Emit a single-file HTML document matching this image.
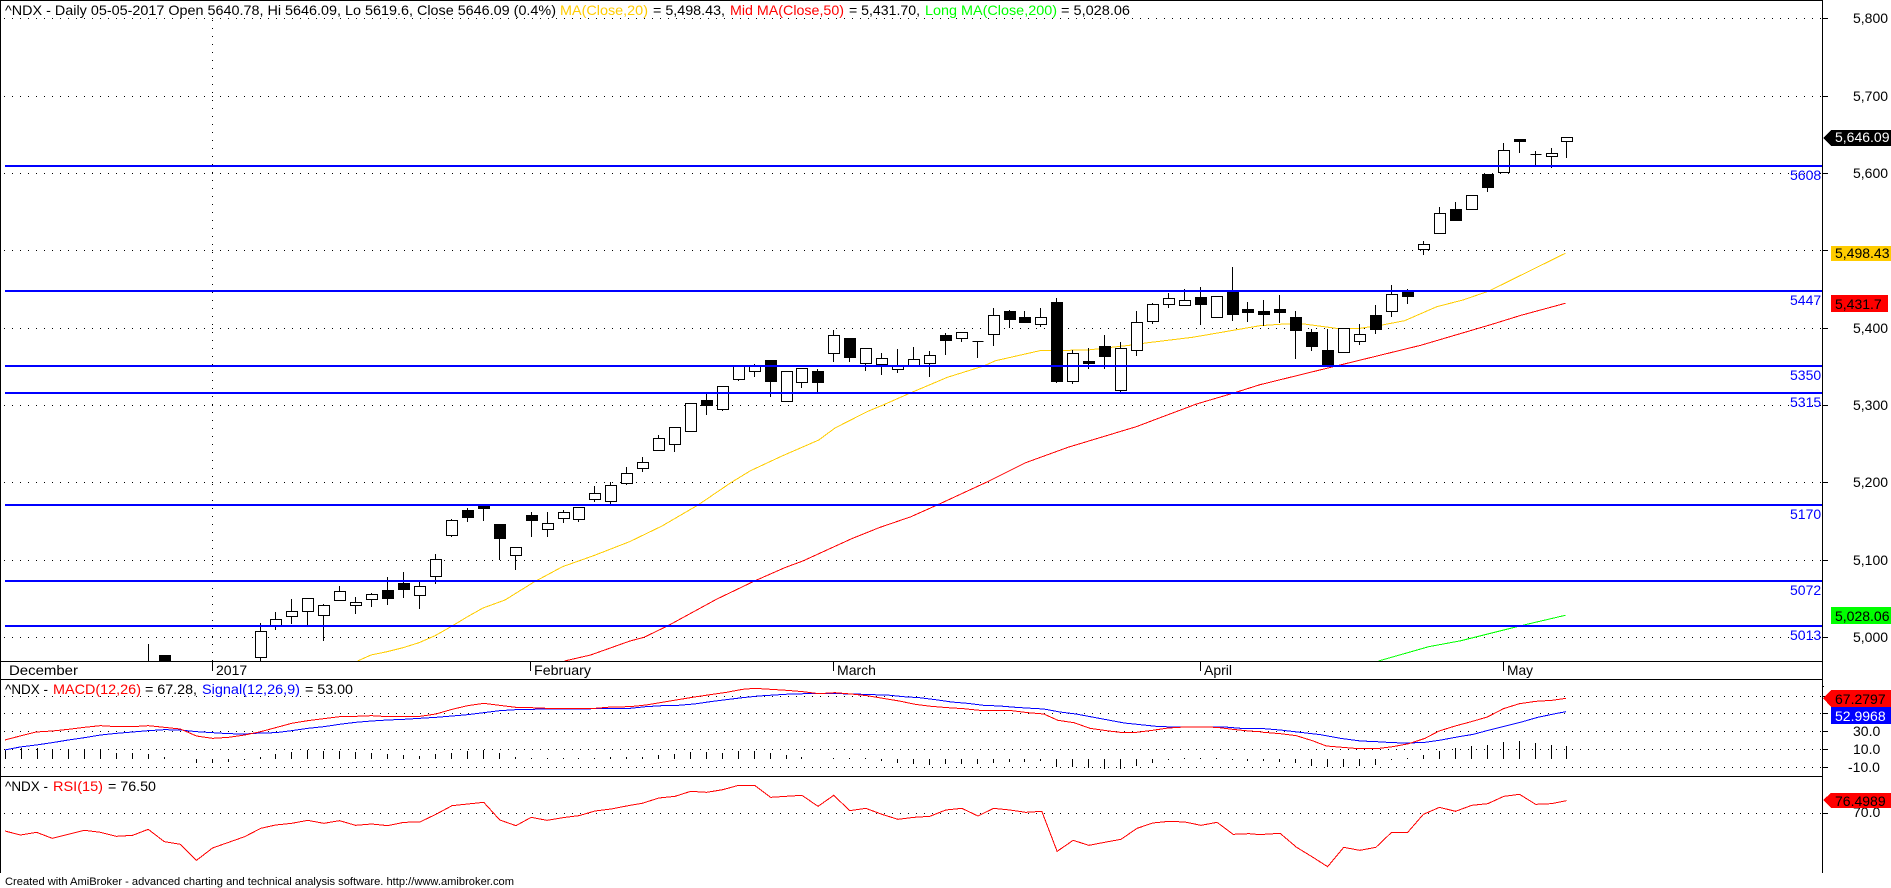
<!DOCTYPE html>
<html><head><meta charset="utf-8"><title>^NDX Chart</title>
<style>
html,body{margin:0;padding:0;background:#fff;width:1891px;height:888px;overflow:hidden}
svg{display:block}
text{font-family:"Liberation Sans",Arial,sans-serif;font-size:14px;fill:#000}
.b{fill:#0000ff}.r{fill:#ff0000}.y{fill:#ffcc00}.g{fill:#00ff00}.w{fill:#fff}
.d{stroke:#000;stroke-width:1;stroke-dasharray:1 7;fill:none}
.l{fill:none;stroke-width:1;shape-rendering:crispEdges;vector-effect:non-scaling-stroke}
</style></head><body>
<svg width="1891" height="888" viewBox="0 0 1891 888" xmlns="http://www.w3.org/2000/svg">
<rect width="1891" height="888" fill="#fff"/>
<defs><clipPath id="pc"><rect x="1" y="1" width="1821" height="660"/></clipPath></defs>

<!-- dotted grid -->
<path class="d" shape-rendering="crispEdges" d="M4 18.5H1822M4 96.5H1822M4 173.5H1822M4 250.5H1822M4 328.5H1822M4 405.5H1822M4 482.5H1822M4 560.5H1822M4 637.5H1822M4 696.5H1822M4 713.5H1822M4 731.5H1822M4 749.5H1822M4 767.5H1822M4 813.5H1822M212.5 20V661"/>

<g clip-path="url(#pc)">
<!-- moving averages -->
<polyline class="l" stroke="#ffcc00" points="357.6,661 371,655 387,651.7 403,647.7 419,642.7 435,635.7 451,626.7 467,617 483,608 505,600 534,582 562.5,566.7 594.6,555.3 630,541.5 662,526 698,505 730.4,483 750.5,470.7 782.7,455.7 818.8,440 835,428 867,411.7 883,405 911,392.7 947.4,377.3 983.6,366 995.6,360.7 1039.8,350.7 1088,350 1132,345 1148,342.7 1192.5,337.3 1260,325.7 1284,324 1304,324 1336,328.3 1360,328.3 1380.5,325.3 1404.6,320.7 1436.8,306.7 1463,300 1489,291 1565.3,253.3"/>
<polyline class="l" stroke="#ff0000" points="564.5,661 590.6,655 630,641 644,637.3 668,625.7 716.4,599.3 754.5,581 784.7,567.7 802.8,561 851,539 879,527.7 911,516.7 939.4,504 987.6,481.7 1025.7,462.7 1068,447.3 1136.2,426.7 1196.5,404 1232.7,393.3 1260,384.7 1332,367 1420.7,345.3 1493,324 1521,315.3 1565.3,303.3"/>
<polyline class="l" stroke="#00ff00" points="1378.5,661 1428.7,646.7 1461,640.7 1521,625.7 1565.3,615.3"/>

<!-- wicks -->
<path fill="none" stroke="#000" stroke-width="1" shape-rendering="crispEdges" d="M148.5 644V661M260.5 623V661M275.5 612V630M291.5 599V624M307.5 598V625M323.5 604V641M339.5 586V601M355.5 597V614M371.5 593V607M387.5 577V605M403.5 572V598M419.5 582V609M435.5 554V584M451.5 519V537M467.5 508V522M483.5 505V521M499.5 524V560M515.5 547V570M531.5 512V537M547.5 512V537M563.5 510V523M578.5 507V522M594.5 486V502M610.5 482V504M626.5 467V485M642.5 457V472M658.5 435V451M674.5 427V452M706.5 394V415M722.5 386V411M738.5 366V381M754.5 364V377M770.5 360V397M801.5 368V388M817.5 369V392M833.5 330V362M849.5 338V362M865.5 348V371M881.5 353V375M897.5 349V373M913.5 347V366M929.5 351V377M945.5 333V355M961.5 332V342M977.5 341V358M993.5 308V346M1009.5 310V328M1024.5 311V322M1040.5 308V327M1056.5 298V383M1072.5 350V384M1088.5 348V369M1104.5 335V369M1120.5 342V392M1136.5 311V356M1152.5 303V324M1168.5 293V308M1184.5 289V306M1200.5 287V325M1232.5 267V321M1247.5 302V322M1263.5 300V326M1279.5 295V323M1295.5 311V359M1311.5 329V351M1327.5 329V364M1343.5 328V353M1359.5 324V345M1375.5 305V334M1391.5 285V317M1407.5 289V304M1423.5 241V255M1439.5 207V234M1455.5 202V221M1471.5 195V210M1487.5 174V192M1503.5 143V172M1519.5 139V153M1535.5 151V166M1551.5 148V168M1566.5 137V158"/>

<!-- white bodies -->
<path fill="#fff" stroke="#000" stroke-width="1" shape-rendering="crispEdges" d="M255.5 631.5h11V657.5h-11zM270.5 619.5h11V626.5h-11zM286.5 611.5h11V616.5h-11zM302.5 598.5h11V611.5h-11zM318.5 605.5h11V615.5h-11zM334.5 591.5h11V600.5h-11zM350.5 602.5h11V605.5h-11zM366.5 594.5h11V599.5h-11zM414.5 586.5h11V595.5h-11zM430.5 559.5h11V576.5h-11zM446.5 520.5h11V535.5h-11zM510.5 547.5h11V555.5h-11zM542.5 523.5h11V529.5h-11zM558.5 512.5h11V518.5h-11zM573.5 507.5h11V519.5h-11zM589.5 493.5h11V499.5h-11zM605.5 485.5h11V501.5h-11zM621.5 473.5h11V483.5h-11zM637.5 462.5h11V468.5h-11zM653.5 438.5h11V450.5h-11zM669.5 427.5h11V444.5h-11zM685.5 403.5h11V431.5h-11zM717.5 386.5h11V409.5h-11zM733.5 366.5h11V379.5h-11zM749.5 366.5h11V371.5h-11zM781.5 371.5h11V401.5h-11zM796.5 368.5h11V382.5h-11zM828.5 335.5h11V353.5h-11zM860.5 348.5h11V363.5h-11zM876.5 358.5h11V364.5h-11zM892.5 365.5h11V369.5h-11zM908.5 359.5h11V366.5h-11zM924.5 355.5h11V363.5h-11zM956.5 332.5h11V338.5h-11zM988.5 315.5h11V334.5h-11zM1035.5 317.5h11V324.5h-11zM1067.5 353.5h11V381.5h-11zM1115.5 348.5h11V390.5h-11zM1131.5 322.5h11V350.5h-11zM1147.5 304.5h11V321.5h-11zM1163.5 298.5h11V304.5h-11zM1179.5 300.5h11V305.5h-11zM1211.5 296.5h11V317.5h-11zM1338.5 328.5h11V352.5h-11zM1354.5 334.5h11V341.5h-11zM1386.5 294.5h11V311.5h-11zM1418.5 244.5h11V249.5h-11zM1434.5 213.5h11V233.5h-11zM1466.5 195.5h11V209.5h-11zM1498.5 150.5h11V172.5h-11zM1546.5 153.5h11V156.5h-11zM1561.5 137.5h11V141.5h-11z"/>

<!-- black bodies -->
<path fill="#000" stroke="#000" stroke-width="1" shape-rendering="crispEdges" d="M159.5 655.5h11V661.5h-11zM382.5 590.5h11V598.5h-11zM398.5 583.5h11V589.5h-11zM462.5 510.5h11V517.5h-11zM478.5 506.5h11V508.5h-11zM494.5 524.5h11V538.5h-11zM526.5 515.5h11V520.5h-11zM701.5 400.5h11V405.5h-11zM765.5 360.5h11V381.5h-11zM812.5 371.5h11V382.5h-11zM844.5 338.5h11V357.5h-11zM940.5 335.5h11V340.5h-11zM1004.5 311.5h11V319.5h-11zM1019.5 317.5h11V322.5h-11zM1051.5 302.5h11V381.5h-11zM1083.5 361.5h11V363.5h-11zM1099.5 346.5h11V356.5h-11zM1195.5 297.5h11V304.5h-11zM1227.5 292.5h11V314.5h-11zM1242.5 309.5h11V312.5h-11zM1258.5 311.5h11V314.5h-11zM1274.5 309.5h11V312.5h-11zM1290.5 317.5h11V330.5h-11zM1306.5 332.5h11V346.5h-11zM1322.5 350.5h11V364.5h-11zM1370.5 315.5h11V329.5h-11zM1402.5 291.5h11V296.5h-11zM1450.5 209.5h11V220.5h-11zM1482.5 174.5h11V187.5h-11zM1514.5 139.5h11V141.5h-11zM972.5 341.5h11M1530.5 154.5h11"/>

<!-- horizontal levels -->
<g fill="#0000ff" shape-rendering="crispEdges">
<rect x="5" y="165" width="1817" height="2"/>
<rect x="5" y="290" width="1817" height="2"/>
<rect x="5" y="365" width="1817" height="2"/>
<rect x="5" y="392" width="1817" height="2"/>
<rect x="5" y="504" width="1817" height="2"/>
<rect x="5" y="580" width="1817" height="2"/>
<rect x="5" y="625" width="1817" height="2"/>
</g>
</g>

<!-- frame -->
<path fill="none" stroke="#000" stroke-width="1" shape-rendering="crispEdges" d="M0 .5H1823M.5 0V873M1822.5 0V873M0 661.5H1822M0 679.5H1822M0 776.5H1822M212.5 662V671M530.5 662V671M833.5 662V671M1200.5 662V671M1503.5 662V671M1823 18.5h5M1823 96.5h5M1823 173.5h5M1823 250.5h5M1823 328.5h5M1823 405.5h5M1823 482.5h5M1823 560.5h5M1823 637.5h5M1823 696.5h5M1823 713.5h5M1823 731.5h5M1823 749.5h5M1823 767.5h5M1823 813.5h5M1823 686.5h1"/>

<!-- header -->
<text x="5" y="15" textLength="551" lengthAdjust="spacingAndGlyphs">^NDX - Daily 05-05-2017 Open 5640.78, Hi 5646.09, Lo 5619.6, Close 5646.09 (0.4%)</text>
<text x="560" y="15" class="y" textLength="88" lengthAdjust="spacingAndGlyphs">MA(Close,20)</text>
<text x="653" y="15" textLength="72" lengthAdjust="spacingAndGlyphs">= 5,498.43,</text>
<text x="730" y="15" class="r" textLength="114" lengthAdjust="spacingAndGlyphs">Mid MA(Close,50)</text>
<text x="849" y="15" textLength="71" lengthAdjust="spacingAndGlyphs">= 5,431.70,</text>
<text x="925" y="15" class="g" textLength="132" lengthAdjust="spacingAndGlyphs">Long MA(Close,200)</text>
<text x="1061" y="15" textLength="69" lengthAdjust="spacingAndGlyphs">= 5,028.06</text>

<!-- level labels -->
<g class="b">
<text class="b" x="1790" y="180">5608</text>
<text class="b" x="1790" y="305">5447</text>
<text class="b" x="1790" y="380">5350</text>
<text class="b" x="1790" y="407">5315</text>
<text class="b" x="1790" y="519">5170</text>
<text class="b" x="1790" y="595">5072</text>
<text class="b" x="1790" y="640">5013</text>
</g>

<!-- axis labels -->
<text x="1853" y="23">5,800</text>
<text x="1853" y="101">5,700</text>
<text x="1853" y="178">5,600</text>
<text x="1853" y="333">5,400</text>
<text x="1853" y="410">5,300</text>
<text x="1853" y="487">5,200</text>
<text x="1853" y="565">5,100</text>
<text x="1853" y="642">5,000</text>
<text x="1853" y="736">30.0</text>
<text x="1853" y="754">10.0</text>
<text x="1848" y="772">-10.0</text>
<text x="1853" y="817">70.0</text>

<!-- value tags -->
<g shape-rendering="crispEdges">
<polygon points="1823,138 1831,130 1891,130 1891,146 1831,146" fill="#000"/>
<rect x="1831" y="246" width="60" height="15" fill="#ffcc00"/>
<rect x="1831" y="295" width="57" height="17" fill="#ff0000"/>
<rect x="1831" y="607" width="60" height="17" fill="#00ff00"/>
<polygon points="1823,698 1831,690 1891,690 1891,707 1831,707" fill="#ff0000"/>
<rect x="1831" y="707" width="60" height="17" fill="#0000ff"/>
<polygon points="1823,800 1831,793 1891,793 1891,808 1831,808" fill="#ff0000"/>
</g>
<text x="1835" y="142" class="w">5,646.09</text>
<text x="1835" y="258">5,498.43</text>
<text x="1835" y="309">5,431.7</text>
<text x="1835" y="621">5,028.06</text>
<text x="1835" y="704">67.2797</text>
<text x="1835" y="721" class="w">52.9968</text>
<text x="1835" y="806">76.4989</text>

<!-- dates -->
<text x="9" y="675" textLength="69" lengthAdjust="spacingAndGlyphs">December</text>
<text x="216" y="675">2017</text>
<text x="534" y="675" textLength="57" lengthAdjust="spacingAndGlyphs">February</text>
<text x="837" y="675" textLength="39" lengthAdjust="spacingAndGlyphs">March</text>
<text x="1204" y="675" textLength="28" lengthAdjust="spacingAndGlyphs">April</text>
<text x="1507" y="675" textLength="26" lengthAdjust="spacingAndGlyphs">May</text>

<!-- MACD -->
<text x="5" y="694" textLength="43" lengthAdjust="spacingAndGlyphs">^NDX -</text>
<text x="53" y="694" class="r" textLength="88" lengthAdjust="spacingAndGlyphs">MACD(12,26)</text>
<text x="145" y="694" textLength="52" lengthAdjust="spacingAndGlyphs">= 67.28,</text>
<text x="202" y="694" class="b" textLength="98" lengthAdjust="spacingAndGlyphs">Signal(12,26,9)</text>
<text x="305" y="694" textLength="48" lengthAdjust="spacingAndGlyphs">= 53.00</text>

<!-- MACD histogram -->
<path fill="none" stroke="#000" stroke-width="1" shape-rendering="crispEdges" d="M5.5 750V759M21.5 748V759M37.5 748V759M52.5 749V759M68.5 750V759M84.5 750V759M100.5 750V759M116.5 753V759M132.5 753V759M148.5 754V759M164.5 757V759M196.5 759V763M212.5 759V763M228.5 759V762M244.5 759V760M260.5 757V759M275.5 754V759M291.5 752V759M307.5 750V759M323.5 751V759M339.5 751V759M355.5 752V759M371.5 753V759M387.5 754V759M403.5 755V759M419.5 756V759M435.5 754V759M451.5 753V759M467.5 751V759M483.5 750V759M499.5 753V759M515.5 757V759M531.5 758V759M547.5 758V759M563.5 758V759M578.5 758V759M594.5 758V759M610.5 757V759M626.5 757V759M642.5 757V759M658.5 755V759M674.5 754V759M690.5 752V759M706.5 752V759M722.5 753V759M738.5 751V759M754.5 751V759M770.5 753V759M786.5 755V759M801.5 757V759M833.5 758V759M849.5 758V759M865.5 758V759M881.5 759V761M897.5 759V763M913.5 759V764M929.5 759V765M945.5 759V764M961.5 759V764M977.5 759V764M993.5 759V763M1009.5 759V762M1024.5 759V762M1040.5 759V761M1056.5 759V767M1072.5 759V767M1088.5 759V768M1104.5 759V769M1120.5 759V769M1136.5 759V766M1152.5 759V763M1168.5 759V760M1184.5 758V759M1200.5 758V759M1216.5 758V759M1232.5 759V760M1247.5 759V761M1263.5 759V761M1279.5 759V762M1295.5 759V763M1311.5 759V766M1327.5 759V767M1343.5 759V767M1359.5 759V766M1375.5 759V765M1391.5 759V760M1407.5 758V759M1423.5 755V759M1439.5 751V759M1455.5 748V759M1471.5 746V759M1487.5 745V759M1503.5 742V759M1519.5 741V759M1535.5 743V759M1551.5 745V759M1566.5 746V759"/>

<!-- MACD lines -->
<g transform="translate(0,600) scale(.40179,.33333)">
<polyline class="l" stroke="#0000ff" points="12,450 50,441 90,435 130,428 170,420 210,413 250,405 290,400 330,396 369,392 409,389 449,390 489,395 529,398 569,401 609,402 649,399 686,398 726,392 766,385 806,380 845,373 885,367 925,363 965,360 1005,358 1045,355 1085,352 1125,348 1164,344 1204,338 1244,332 1284,329 1322,328 1361,327 1401,327 1441,327 1481,326 1521,325 1568,325"/>
<polyline class="l" stroke="#ff0000" points="12,420 50,408 90,396 130,393 170,388 210,382 250,377 290,380 330,380 369,377 409,382 449,387 489,408 529,415 569,412 609,405 649,395 686,383 726,370 766,362 806,356 845,350 885,349 925,347 965,350 1005,349 1045,349 1085,342 1125,328 1164,317 1204,310 1244,316 1284,322 1322,323 1361,325 1401,325 1441,325 1481,325 1521,321 1568,320"/>
<polyline class="l" stroke="#ff0000" points="12,693 51,705 91,697 130,715 170,703 210,691 250,697 290,709 330,706 369,688 409,725 449,733 489,781 529,744 569,727 609,710 649,685 686,675 726,670 766,661 806,670 845,662 885,676 925,672 965,677 1005,667 1045,666 1085,643 1125,617 1164,612 1204,607 1244,660 1284,677 1322,652 1361,661 1401,653 1441,647 1481,633 1521,627 1568,616"/>
</g>
<g transform="translate(630,600) scale(.40179,.33333)">
<polyline class="l" stroke="#0000ff" points="0,325 40,320 80,317 120,316 160,312 200,305 240,299 280,293 320,288 360,285 400,282 440,281 480,281 520,281 560,282 600,284 640,285 680,290 720,293 760,299 800,306 840,310 880,316 920,318 960,322 1000,325 1030,327 1070,336 1110,342 1150,351 1190,360 1230,369 1270,374 1310,379 1350,381 1400,381 1480,381 1520,385 1568,386"/>
<polyline class="l" stroke="#ff0000" points="0,320 40,315 80,307 120,299 160,291 200,284 240,277 280,268 310,265 350,268 390,271 430,275 470,281 510,278 550,282 590,287 630,295 670,303 710,313 750,319 790,323 830,326 870,331 910,331 950,332 990,338 1030,342 1065,361 1105,368 1145,385 1185,392 1220,397 1260,397 1300,391 1340,384 1380,381 1420,381 1460,382 1500,388 1540,393 1568,395"/>
<polyline class="l" stroke="#ff0000" points="0,616 30,610 72,594 112,589 151,574 191,577 231,569 270,556 310,556 350,592 388,589 428,586 468,619 507,586 547,632 587,625 627,643 667,658 707,652 746,649 786,630 826,625 866,648 905,625 945,630 985,637 1025,634 1063,754 1103,721 1142,736 1181,727 1222,718 1262,685 1301,669 1341,664 1381,666 1421,676 1461,667 1501,703 1541,701 1568,704"/>
</g>
<g transform="translate(1260,600) scale(.40242,.33333)">
<polyline class="l" stroke="#0000ff" points="0,385 50,390 100,397 150,404 200,415 250,423 290,425 330,428 370,429 410,427 450,420 490,411 530,403 570,390 610,378 650,366 690,352 730,342 760,335"/>
<polyline class="l" stroke="#ff0000" points="0,396 50,401 90,407 130,422 165,438 205,442 245,446 290,446 330,440 370,431 410,415 445,393 485,378 525,365 565,351 605,326 645,311 685,304 725,301 760,295"/>
<polyline class="l" stroke="#ff0000" points="0,704 9,703 50,700 91,742 129,770 168,800 208,742 248,751 288,742 327,697 367,697 406,643 446,622 486,634 526,616 566,611 606,589 645,583 685,613 724,611 762,602"/>
</g>

<!-- RSI title -->
<text x="5" y="791" textLength="43" lengthAdjust="spacingAndGlyphs">^NDX -</text>
<text x="53" y="791" class="r" textLength="50" lengthAdjust="spacingAndGlyphs">RSI(15)</text>
<text x="108" y="791" textLength="48" lengthAdjust="spacingAndGlyphs">= 76.50</text>

<!-- footer -->
<text x="5" y="885" style="font-size:11px" textLength="509" lengthAdjust="spacingAndGlyphs">Created with AmiBroker - advanced charting and technical analysis software. http://www.amibroker.com</text>
</svg>
</body></html>
